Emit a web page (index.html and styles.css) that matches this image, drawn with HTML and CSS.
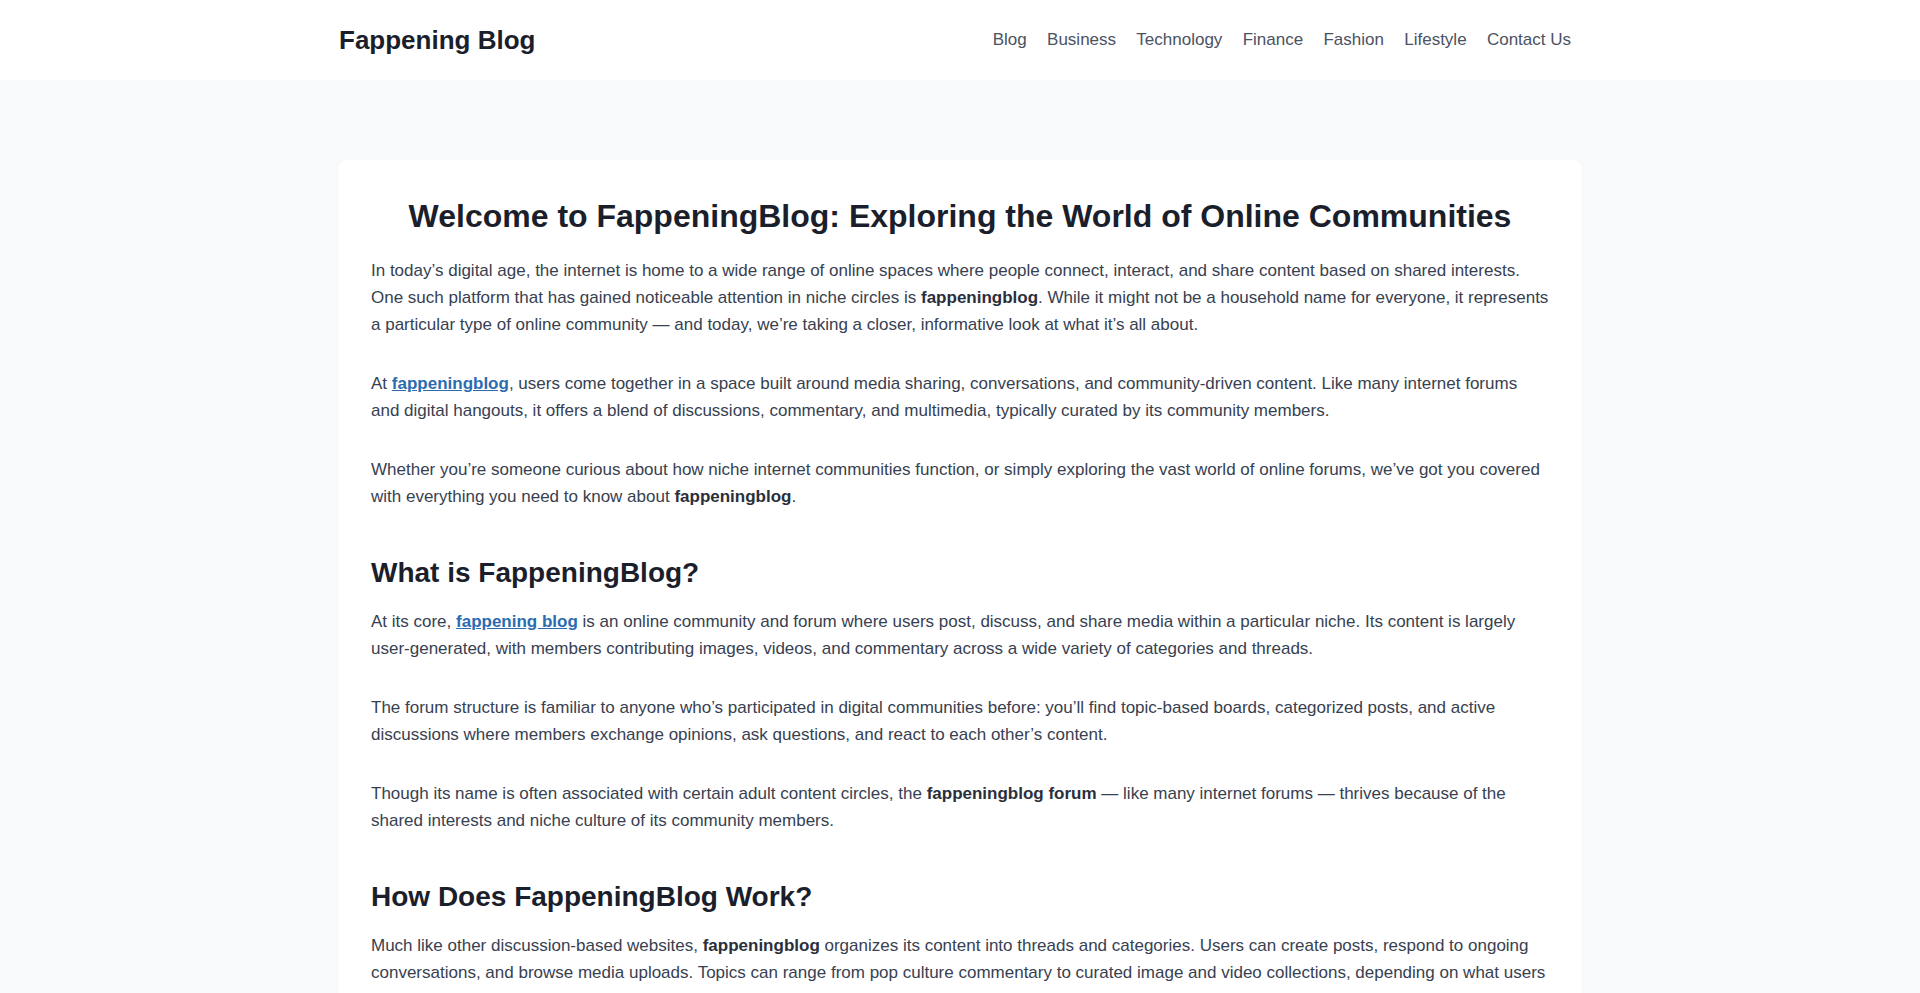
FILE: index.html
```html
<!DOCTYPE html>
<html lang="en">
<head>
<meta charset="utf-8">
<title>Fappening Blog</title>
<link rel="stylesheet" href="styles.css">
</head>
<body>
<header class="site-header">
  <div class="container header-inner">
    <a class="logo" href="#">Fappening Blog</a>
    <nav class="nav">
      <a href="#">Blog</a>
      <a href="#">Business</a>
      <a href="#">Technology</a>
      <a href="#">Finance</a>
      <a href="#">Fashion</a>
      <a href="#">Lifestyle</a>
      <a href="#">Contact Us</a>
    </nav>
  </div>
</header>
<main class="main">
  <article class="container card">
    <h1>Welcome to FappeningBlog: Exploring the World of Online Communities</h1>
    <p>In today’s digital age, the internet is home to a wide range of online spaces where people connect, interact, and share content based on shared interests. One such platform that has gained noticeable attention in niche circles is <strong>fappeningblog</strong>. While it might not be a household name for everyone, it represents a particular type of online community — and today, we’re taking a closer, informative look at what it’s all about.</p>
    <p>At <a class="link" href="#"><strong>fappeningblog</strong></a>, users come together in a space built around media sharing, conversations, and community-driven content. Like many internet forums and digital hangouts, it offers a blend of discussions, commentary, and multimedia, typically curated by its community members.</p>
    <p>Whether you’re someone curious about how niche internet communities function, or simply exploring the vast world of online forums, we’ve got you covered with everything you need to know about <strong>fappeningblog</strong>.</p>
    <h2>What is FappeningBlog?</h2>
    <p>At its core, <a class="link" href="#"><strong>fappening blog</strong></a> is an online community and forum where users post, discuss, and share media within a particular niche. Its content is largely user-generated, with members contributing images, videos, and commentary across a wide variety of categories and threads.</p>
    <p>The forum structure is familiar to anyone who’s participated in digital communities before: you’ll find topic-based boards, categorized posts, and active discussions where members exchange opinions, ask questions, and react to each other’s content.</p>
    <p>Though its name is often associated with certain adult content circles, the <strong>fappeningblog forum</strong> — like many internet forums — thrives because of the shared interests and niche culture of its community members.</p>
    <h2>How Does FappeningBlog Work?</h2>
    <p>Much like other discussion-based websites, <strong>fappeningblog</strong> organizes its content into threads and categories. Users can create posts, respond to ongoing conversations, and browse media uploads. Topics can range from pop culture commentary to curated image and video collections, depending on what users are interested in.</p>
  </article>
</main>
</body>
</html>
```
FILE: styles.css
```css
* { box-sizing: border-box; }
html, body { margin: 0; padding: 0; }
body {
  font-family: "Liberation Sans", Arial, sans-serif;
  background: #f8f9fb;
  color: #374151;
}
.container {
  width: 1242px;
  margin: 0 auto;
}
.site-header {
  background: #ffffff;
  height: 80px;
}
.header-inner {
  height: 80px;
  display: flex;
  align-items: center;
  justify-content: space-between;
}
.logo {
  font-size: 26px;
  font-weight: 700;
  color: #1b1e2b;
  text-decoration: none;
  line-height: 1;
}
.nav {
  display: flex;
  gap: 20.3px;
  padding-right: 10px;
}
.nav a {
  font-size: 17px;
  color: #4b5262;
  text-decoration: none;
}
.main {
  padding-top: 80px;
}
.card {
  background: #ffffff;
  border-radius: 8px;
  padding: 37px 32px 32px;
}
.card h1 {
  margin: 0 0 22px;
  font-size: 32px;
  line-height: 1.2;
  font-weight: 700;
  text-align: center;
  color: #1b1e2b;
}
.card h2 {
  margin: 46px 0 18px;
  font-size: 28px;
  line-height: 1.2;
  font-weight: 700;
  color: #1b1e2b;
}
.card p {
  margin: 0 0 32px;
  font-size: 17px;
  line-height: 27px;
}
.card strong {
  color: #2a2f3b;
  font-weight: 700;
}
.card .link, .card .link strong {
  color: #2b6cb0;
}
.card .link {
  text-decoration: underline;
}
```
